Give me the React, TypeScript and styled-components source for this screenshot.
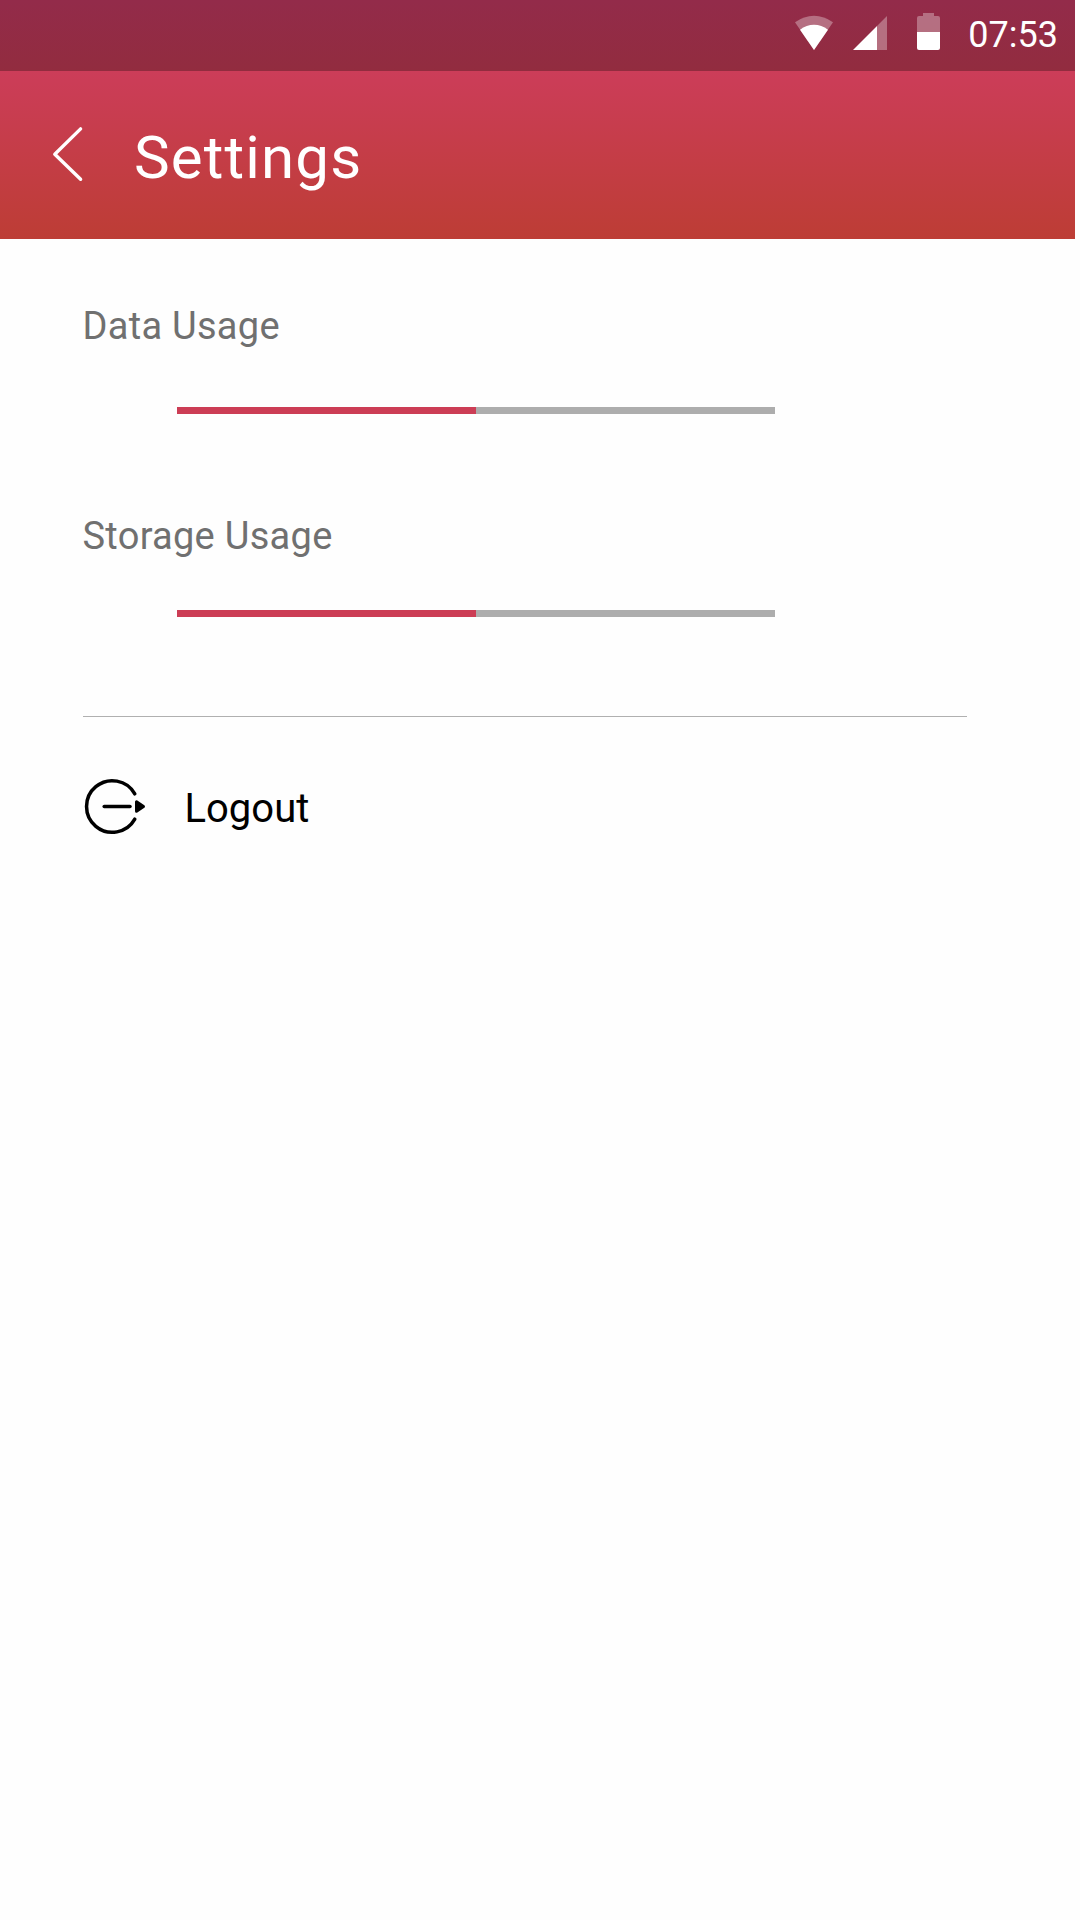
import React from "react";
import styled, { createGlobalStyle } from "styled-components";

const GlobalStyle = createGlobalStyle`
  * { box-sizing: border-box; }
  body { margin: 0; background: #fefefe; font-family: Roboto, "Liberation Sans", sans-serif; }
`;

const Screen = styled.main`
  width: 1075px;
  min-height: 1920px;
  display: flex;
  flex-direction: column;
`;

const StatusBar = styled.div`
  height: 71px;
  display: flex;
  align-items: flex-start;
  justify-content: flex-end;
  padding: 12px 17px 0 0;
  background: linear-gradient(#932b4a, #922c3f);
  color: #fff;
`;

const Clock = styled.time`
  margin: 1px 0 0 25px;
  font-size: 36px;
  line-height: 44px;
`;

const Header = styled.header`
  height: 168px;
  display: flex;
  align-items: flex-start;
  padding: 46px 0 0 50px;
  background: linear-gradient(#cc3d59, #bd3d35);
  color: #fff;
`;

const BackButton = styled.button`
  display: flex;
  padding: 8px 0 0;
  border: 0;
  background: none;
  color: inherit;
`;

const Title = styled.h1`
  margin: 3px 0 0 48px;
  font-size: 60px;
  font-weight: 400;
  line-height: 76px;
  letter-spacing: 1.15px;
`;

const Content = styled.div`
  display: flex;
  flex-direction: column;
  padding: 63px 108px 0 83px;
`;

const Usage = styled.section<{ $gap: number; $after: number }>`
  display: flex;
  flex-direction: column;
  gap: ${(p) => p.$gap}px;
  margin-bottom: ${(p) => p.$after}px;
`;

const Label = styled.h2`
  margin: 0 0 0 -0.5px;
  color: #707070;
  font-size: 38px;
  font-weight: 400;
  line-height: 48px;
  letter-spacing: 0.28px;
`;

const Track = styled.div`
  width: 598px;
  height: 7px;
  margin-left: 94px;
  background: #adadad;
`;

const Fill = styled.div`
  height: 100%;
  background: #cc3d55;
`;

const Divider = styled.hr`
  width: 100%;
  height: 1px;
  margin: 0;
  border: 0;
  background: #b0b0b0;
`;

const LogoutButton = styled.button`
  display: flex;
  align-items: flex-start;
  margin-top: 60px;
  padding: 0;
  border: 0;
  background: none;
  color: #000;
  font-family: inherit;
  font-size: 40px;
  line-height: 50px;
`;

const LogoutText = styled.span`
  margin: 7px 0 0 35.5px;
`;

const StatusIcons = () => (
  <svg width="150" height="40" viewBox="793 12 150 40" fill="#fff">
    <path opacity="0.32" d="M814 50 795 22.3Q804 15.8 814 15.8T833 22.3Z" />
    <path d="M814 50 800 29.8Q806.5 24.8 814 24.8T828 29.8Z" />
    <path opacity="0.32" d="M877 26 887 16V50H877Z" />
    <path d="M853 50 877 26V50Z" />
    <path opacity="0.32" d="M917 32V18Q917 16 919 16H923V13H934V16H938Q940 16 940 18V32Z" />
    <path d="M917 32H940V48Q940 50 938 50H919Q917 50 917 48Z" />
  </svg>
);

const BackIcon = () => (
  <svg width="36" height="60" viewBox="50 125 36 60" fill="none" stroke="#fff">
    <path d="M80.6 128.9 54.8 154.2 80.6 179.3" strokeWidth="3.4" strokeLinecap="round" strokeLinejoin="round" />
  </svg>
);

const LogoutIcon = () => (
  <svg width="66" height="60" viewBox="83 777 66 60" fill="none" stroke="#000" strokeLinecap="round">
    <path d="M134.8 793.8A25.8 25.8 0 1 0 134.8 819.2" strokeWidth="3.5" />
    <path d="M104.2 806.5H130" strokeWidth="3.5" />
    <path d="M136.5 801.8V811.2L143.5 806.5Z" fill="#000" strokeWidth="3" strokeLinejoin="round" />
  </svg>
);

const meters = [
  { name: "Data Usage", value: 50, gap: 57, after: 98 },
  { name: "Storage Usage", value: 50, gap: 50, after: 99 },
];

export default function App() {
  return (
    <>
      <GlobalStyle />
      <Screen>
        <StatusBar>
          <StatusIcons />
          <Clock>07:53</Clock>
        </StatusBar>
        <Header>
          <BackButton aria-label="Back">
            <BackIcon />
          </BackButton>
          <Title>Settings</Title>
        </Header>
        <Content>
          {meters.map((m) => (
            <Usage key={m.name} $gap={m.gap} $after={m.after}>
              <Label>{m.name}</Label>
              <Track>
                <Fill style={{ width: `${m.value}%` }} />
              </Track>
            </Usage>
          ))}
          <Divider />
          <LogoutButton>
            <LogoutIcon />
            <LogoutText>Logout</LogoutText>
          </LogoutButton>
        </Content>
      </Screen>
    </>
  );
}
